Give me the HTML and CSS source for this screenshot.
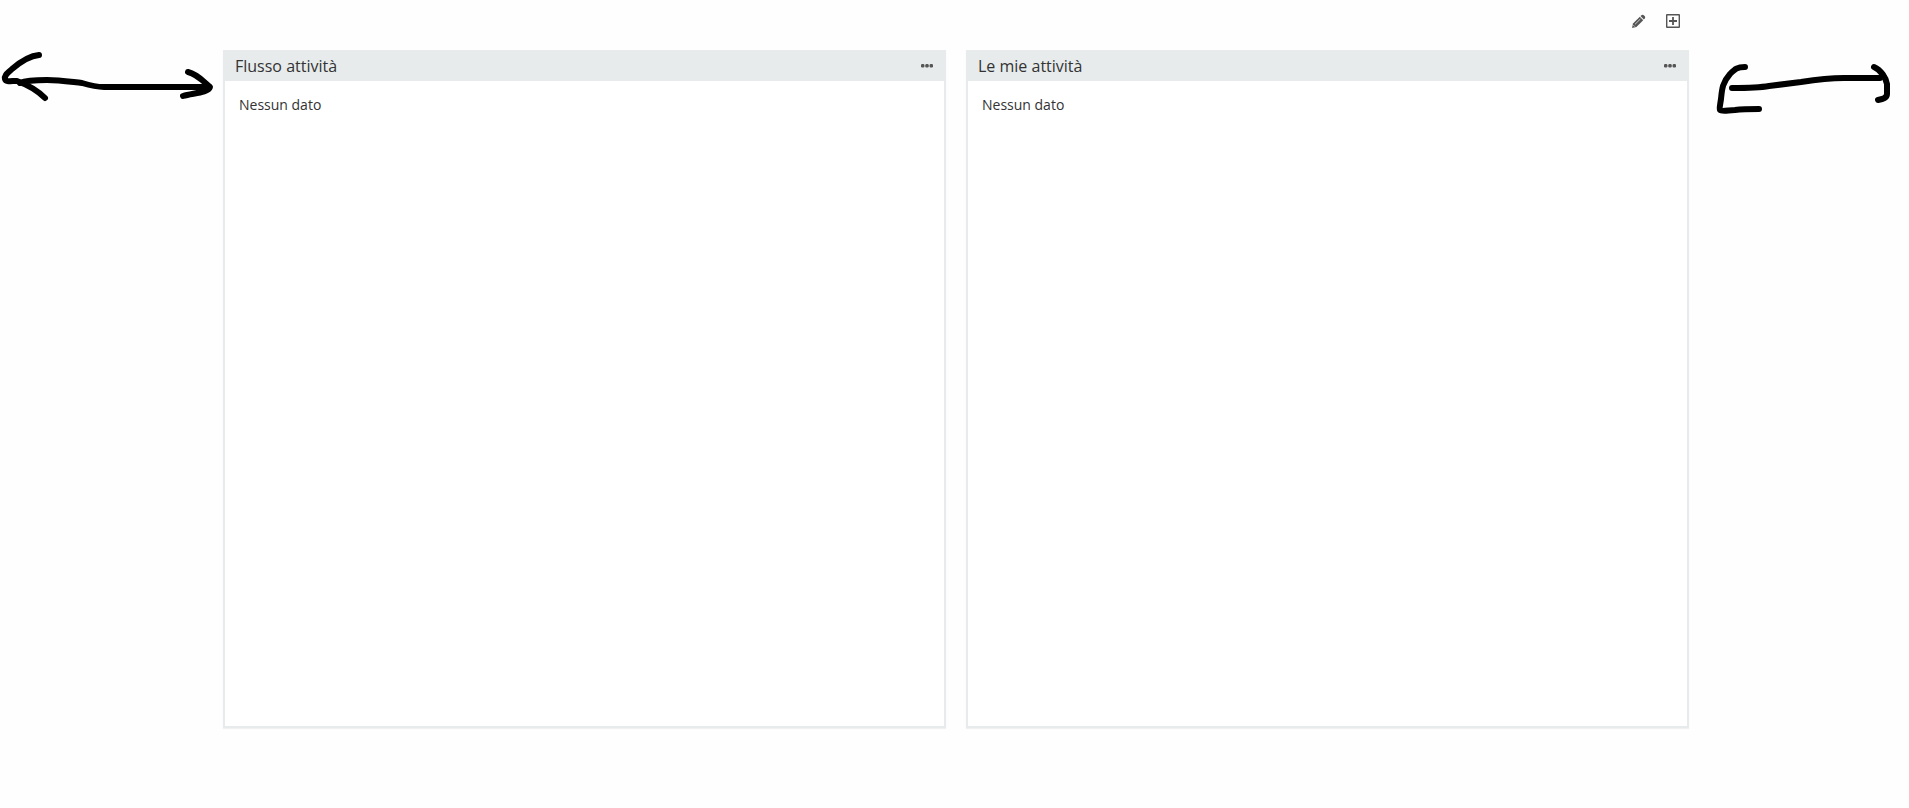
FILE: index.html
```
<!DOCTYPE html>
<html lang="it">
<head>
    <meta charset="UTF-8">
    <meta name="viewport" content="width=device-width, initial-scale=1.0">
    <title>Dashboard</title>
    <link rel="stylesheet" href="styles.css">
</head>
<body>

    <div class="page">
        <!-- Left margin arrow -->
        <div class="side">
            <svg class="arrow" width="223" height="70" viewBox="0 0 223 70" aria-hidden="true">
                <path d="M39 15C28 16 19 23 12 29C8 33 4 35 5 39C6 42 10 41 17 41C28 45 38 51 45 58"/>
                <path d="M20 43C27 40 38 40 47 40C60 40 72 42 82 43C92 46 96 47 104 47H209"/>
                <path d="M188 32C197 34 203 41 210 47C208 53 193 53 183 56"/>
            </svg>
        </div>

        <main class="dashboard">
            <div class="toolbar">
                <button class="icon-btn" type="button" aria-label="Modifica">
                    <svg width="14" height="14" viewBox="0 0 14 14">
                        <path d="M0 14L1 9.6L7.8 2.8L11.2 6.2L4.4 13Z"/>
                        <path d="M8.5 2.1L9.8 1Q11 0.4 12 1.4L12.6 2Q13.6 3 13 4.2L11.9 5.5Z"/>
                        <path class="cut" d="M3 10.3L8.4 5M1.4 11.2L2.8 12.6"/>
                    </svg>
                </button>
                <button class="icon-btn" type="button" aria-label="Aggiungi">
                    <svg width="14" height="14" viewBox="0 0 14 14">
                        <path fill-rule="evenodd" d="M1 0H13Q14 0 14 1V13Q14 14 13 14H1Q0 14 0 13V1Q0 0 1 0ZM1.4 1.4V12.6H12.6V1.4Z"/>
                        <path d="M6.1 3H7.9V6.1H11V7.9H7.9V11H6.1V7.9H3V6.1H6.1Z"/>
                    </svg>
                </button>
            </div>

            <div class="cards">
                <section class="card">
                    <div class="card-header">
                        <h2>Flusso attività</h2>
                        <button class="icon-btn" type="button" aria-label="Menu Flusso attività">
                            <svg width="12" height="4" viewBox="0 0 12 4">
                                <rect width="3.4" height="3.4" rx="1.2"/>
                                <rect x="4.3" width="3.4" height="3.4" rx="1.2"/>
                                <rect x="8.6" width="3.4" height="3.4" rx="1.2"/>
                            </svg>
                        </button>
                    </div>
                    <p class="card-body">Nessun dato</p>
                </section>

                <section class="card">
                    <div class="card-header">
                        <h2>Le mie attività</h2>
                        <button class="icon-btn" type="button" aria-label="Menu Le mie attività">
                            <svg width="12" height="4" viewBox="0 0 12 4">
                                <rect width="3.4" height="3.4" rx="1.2"/>
                                <rect x="4.3" width="3.4" height="3.4" rx="1.2"/>
                                <rect x="8.6" width="3.4" height="3.4" rx="1.2"/>
                            </svg>
                        </button>
                    </div>
                    <p class="card-body">Nessun dato</p>
                </section>
            </div>
        </main>

        <!-- Right margin arrow -->
        <div class="side">
            <svg class="arrow" width="220" height="80" viewBox="0 0 220 80" aria-hidden="true">
                <path d="M56 27C48 27 46 29 41 34C33 43 33 50 32 59C31 66 30 69 31 70C33 72 40 70 46 70C54 69 62 69 70 69"/>
                <path d="M43 48C58 48 69 48 80 46L112 42C131 39 143 38 155 38H191"/>
                <path d="M185 27C192 30 197 38 198 44V54C198 58 194 59 189 60"/>
            </svg>
        </div>
    </div>

</body>
</html>
```
FILE: styles.css
```
* {
    box-sizing: border-box;
}

body {
    margin: 0;
    background: #fefefe;
    color: #333;
    font-family: 'Open Sans', 'Noto Sans', sans-serif;
    font-size: 14px;
}

.page {
    display: grid;
    grid-template-columns: 223px 1fr 220px;
    min-height: 100vh;
}

.side {
    padding-top: 40px;
}

.arrow {
    display: block;
    fill: none;
    stroke: #000;
    stroke-width: 6;
    stroke-linecap: round;
    stroke-linejoin: round;
}

.dashboard {
    display: flex;
    flex-direction: column;
    padding-bottom: 80px;
}

.toolbar {
    display: flex;
    justify-content: flex-end;
    gap: 20px;
    height: 50px;
    padding: 14px 9px 0;
}

.icon-btn {
    display: block;
    padding: 0;
    border: none;
    background: none;
    cursor: pointer;
    line-height: 0;
}

.toolbar .icon-btn {
    height: 14px;
}

.icon-btn svg {
    display: block;
    fill: #555;
}

.icon-btn .cut {
    fill: none;
    stroke: #ccc;
    stroke-width: 1;
}

.cards {
    flex: 1;
    display: grid;
    grid-template-columns: 1fr 1fr;
    gap: 20px;
}

.card {
    background: #fff;
    border: 2px solid #e7ebec;
    border-top: none;
    box-shadow: 0 1px 1px rgba(0, 0, 0, 0.05);
}

.card-header {
    display: flex;
    justify-content: space-between;
    align-items: center;
    height: 31px;
    padding: 1px 11px 0 10px;
    background: #e7ebec;
}

.card-header h2 {
    margin: 0;
    font-size: 16px;
    font-weight: 400;
    line-height: 32px;
}

.card-body {
    margin: 0;
    padding: 14px;
    line-height: 20px;
}
```
